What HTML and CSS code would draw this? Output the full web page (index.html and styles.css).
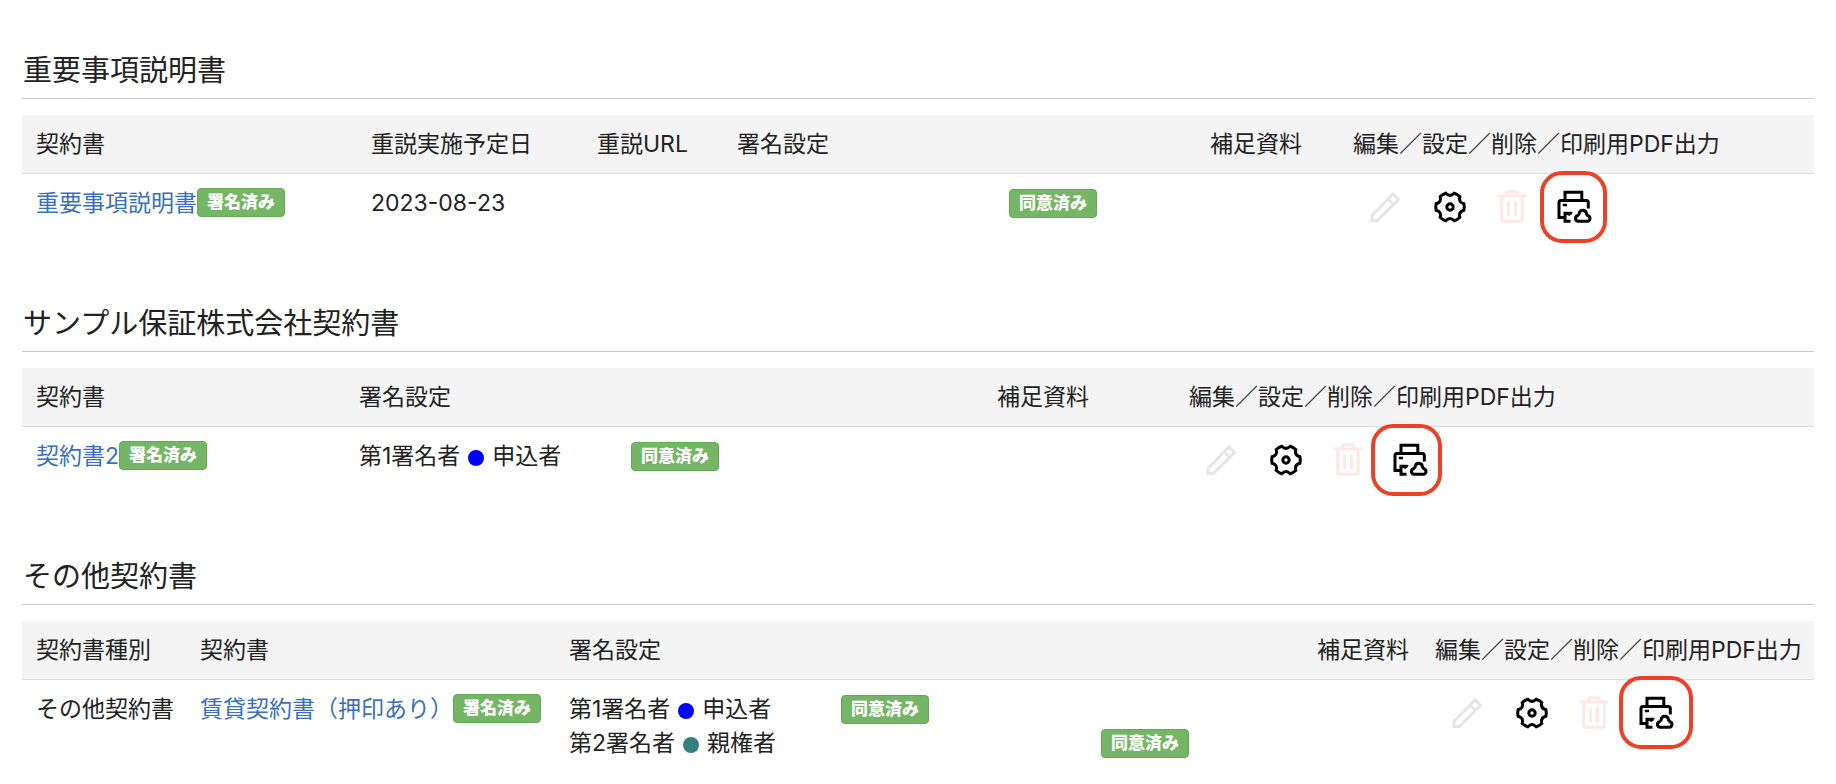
FILE: index.html
```html
<!DOCTYPE html>
<html lang="ja">

<head>
    <meta charset="UTF-8">
    <meta name="viewport" content="width=device-width, initial-scale=1.0">
    <title>契約書一覧</title>
    <link rel="stylesheet" href="styles.css">
</head>

<body>
    <!-- アイコン定義 -->
    <svg class="icon-defs" aria-hidden="true">
        <symbol id="icon-edit" viewBox="0 0 34 34">
            <path d="M2 30.5V25.5L23 4L28.5 9.5L7.5 30.5Z M18 9L23.5 14.5" />
        </symbol>
        <symbol id="icon-setting" viewBox="0 0 34 34">
            <path d="M13.8 3.3Q18 7.5 22.2 3.3A14.3 14.3 0 0 1 27.8 6.5Q26.2 12.2 31.9 13.8A14.3 14.3 0 0 1 31.9 20.2Q26.2 21.8 27.8 27.5A14.3 14.3 0 0 1 22.2 30.7Q18 26.5 13.8 30.7A14.3 14.3 0 0 1 8.2 27.5Q9.8 21.8 4.1 20.2A14.3 14.3 0 0 1 4.1 13.8Q9.8 12.2 8.2 6.5A14.3 14.3 0 0 1 13.8 3.3Z" />
            <circle cx="18" cy="17" r="3.2" />
        </symbol>
        <symbol id="icon-delete" viewBox="0 0 34 34">
            <path d="M4 6H32 M11.5 6L13.5 1.7H22.5L24.5 6 M7.7 6V29.5Q7.7 31.3 9.5 31.3H26.5Q28.3 31.3 28.3 29.5V6 M14.7 11.5V26 M21.3 11.5V26" />
        </symbol>
        <symbol id="icon-print" viewBox="0 0 34 34">
            <path d="M9 10V2.2H25.8V10 M8.5 27.6H3V12.5Q3 10.4 5 10.4H30.3Q32.3 10.4 32.3 12.5V18.5 M15.5 23.3H9V31.3H14.5" />
            <path class="solid" d="M6.8 13.7H11V16.3H6.8Z M9 22H17L13.5 26L9 24Z" />
            <path d="M21.8 31.2H31.6A2.8 2.8 0 0 0 31.8 25.7L30.6 24.2C30 18.8 23.6 18.8 23 24.2L21.6 25.7A2.8 2.8 0 0 0 21.8 31.2Z" />
        </symbol>
    </svg>

    <!-- 重要事項説明書 -->
    <section class="contract">
        <h2>重要事項説明書</h2>
        <table class="explain-table">
            <thead>
                <tr>
                    <th class="col-name">契約書</th>
                    <th class="col-date">重説実施予定日</th>
                    <th class="col-url">重説URL</th>
                    <th>署名設定</th>
                    <th class="col-doc">補足資料</th>
                    <th class="col-action">編集／設定／削除／印刷用PDF出力</th>
                </tr>
            </thead>
            <tbody>
                <tr>
                    <td><a href="#">重要事項説明書</a><span class="label">署名済み</span></td>
                    <td>2023-08-23</td>
                    <td></td>
                    <td>
                        <div class="signer">
                            <span></span>
                            <span class="label">同意済み</span>
                        </div>
                    </td>
                    <td></td>
                    <td>
                        <div class="actions">
                            <button class="edit" aria-label="編集" disabled><svg><use href="#icon-edit" /></svg></button>
                            <button class="setting" aria-label="設定"><svg><use href="#icon-setting" /></svg></button>
                            <button class="delete" aria-label="削除" disabled><svg><use href="#icon-delete" /></svg></button>
                            <button class="print" aria-label="印刷用PDF出力"><svg><use href="#icon-print" /></svg></button>
                        </div>
                    </td>
                </tr>
            </tbody>
        </table>
    </section>

    <!-- 保証会社契約書 -->
    <section class="contract">
        <h2>サンプル保証株式会社契約書</h2>
        <table class="guarantee-table">
            <thead>
                <tr>
                    <th class="col-name">契約書</th>
                    <th>署名設定</th>
                    <th class="col-doc">補足資料</th>
                    <th class="col-action">編集／設定／削除／印刷用PDF出力</th>
                </tr>
            </thead>
            <tbody>
                <tr>
                    <td><a href="#">契約書2</a><span class="label">署名済み</span></td>
                    <td>
                        <div class="signer">
                            <span>第1署名者<i class="dot blue"></i>申込者</span>
                            <span class="label">同意済み</span>
                        </div>
                    </td>
                    <td></td>
                    <td>
                        <div class="actions">
                            <button class="edit" aria-label="編集" disabled><svg><use href="#icon-edit" /></svg></button>
                            <button class="setting" aria-label="設定"><svg><use href="#icon-setting" /></svg></button>
                            <button class="delete" aria-label="削除" disabled><svg><use href="#icon-delete" /></svg></button>
                            <button class="print" aria-label="印刷用PDF出力"><svg><use href="#icon-print" /></svg></button>
                        </div>
                    </td>
                </tr>
            </tbody>
        </table>
    </section>

    <!-- その他契約書 -->
    <section class="contract">
        <h2>その他契約書</h2>
        <table class="other-table">
            <thead>
                <tr>
                    <th class="col-type">契約書種別</th>
                    <th class="col-name">契約書</th>
                    <th>署名設定</th>
                    <th class="col-doc">補足資料</th>
                    <th class="col-action">編集／設定／削除／印刷用PDF出力</th>
                </tr>
            </thead>
            <tbody>
                <tr>
                    <td>その他契約書</td>
                    <td><a href="#">賃貸契約書（押印あり）</a><span class="label">署名済み</span></td>
                    <td>
                        <div class="signer">
                            <span>第1署名者<i class="dot blue"></i>申込者</span>
                            <span class="label">同意済み</span>
                        </div>
                        <div class="signer">
                            <span>第2署名者<i class="dot teal"></i>親権者</span>
                            <span></span>
                            <span class="label">同意済み</span>
                        </div>
                    </td>
                    <td></td>
                    <td>
                        <div class="actions">
                            <button class="edit" aria-label="編集" disabled><svg><use href="#icon-edit" /></svg></button>
                            <button class="setting" aria-label="設定"><svg><use href="#icon-setting" /></svg></button>
                            <button class="delete" aria-label="削除" disabled><svg><use href="#icon-delete" /></svg></button>
                            <button class="print" aria-label="印刷用PDF出力"><svg><use href="#icon-print" /></svg></button>
                        </div>
                    </td>
                </tr>
            </tbody>
        </table>
    </section>
</body>

</html>
```
FILE: styles.css
```css
body {
    margin: 0;
    padding: 49px 22px 0;
    background-color: #fff;
    color: #222;
    font-family: Inter, "Noto Sans CJK JP", sans-serif;
    font-size: 23px;
    line-height: 34px;
}

.icon-defs {
    display: none;
}

.contract {
    margin-bottom: 66px;
}

.contract:last-child {
    margin-bottom: 0;
}

h2 {
    margin: 0 0 16px;
    padding: 0 1px 5px;
    border-bottom: 1px solid #ccc;
    font-size: 29px;
    font-weight: normal;
    line-height: 44px;
}

table {
    width: 100%;
    border-collapse: separate;
    border-spacing: 0;
    table-layout: fixed;
}

th,
td {
    height: 34px;
    padding: 12px 14px;
    text-align: left;
    vertical-align: top;
    font-weight: normal;
    white-space: nowrap;
}

th {
    background-color: #f4f4f4;
    border-bottom: 1px solid #ddd;
}

a {
    color: #3a70b5;
    text-decoration: none;
}

/* 列幅:署名設定の列は残り幅 */
.explain-table .col-name {
    width: 307px;
}

.explain-table .col-date {
    width: 198px;
}

.explain-table .col-url {
    width: 112px;
}

.explain-table .col-doc {
    width: 115px;
}

.explain-table .col-action {
    width: 447px;
}

.guarantee-table .col-name {
    width: 295px;
}

.guarantee-table .col-doc {
    width: 164px;
}

.guarantee-table .col-action {
    width: 611px;
}

.other-table .col-type {
    width: 136px;
}

.other-table .col-name {
    width: 341px;
}

.other-table .col-doc {
    width: 90px;
}

.other-table .col-action {
    width: 365px;
}

.label {
    display: inline-block;
    box-sizing: border-box;
    height: 29px;
    padding: 0 9px;
    border: 1px solid #62ab54;
    border-radius: 4px;
    background-color: #74b566;
    color: #fff;
    font-size: 17px;
    font-weight: 900;
    line-height: 26px;
    vertical-align: middle;
    margin: -4px 0 0;
}

.signer {
    display: grid;
    grid-template-columns: 272px 260px auto;
    align-items: center;
    height: 34px;
}

.signer .label {
    justify-self: start;
    margin: 0;
}

.dot {
    display: inline-block;
    width: 16px;
    height: 16px;
    margin: 0 8px;
    border-radius: 50%;
    vertical-align: -2px;
}

.blue {
    background-color: #0000fb;
}

.teal {
    background-color: #348080;
}

.actions {
    display: flex;
    gap: 28px;
    height: 34px;
    padding: 4px 0 0 17px;
}

button {
    position: relative;
    width: 34px;
    height: 34px;
    padding: 0;
    border: none;
    background: none;
    color: #000;
    cursor: pointer;
}

button:disabled {
    cursor: default;
}

button svg {
    display: block;
    width: 34px;
    height: 34px;
    overflow: visible;
    fill: none;
    stroke: currentColor;
    stroke-width: 3;
}

symbol {
    overflow: visible;
}

.solid {
    fill: currentColor;
    stroke: none;
}

.edit {
    color: #e5e5e5;
}

.delete {
    color: #fde8e8;
}

/* 印刷ボタンの赤枠 */
.print::after {
    content: "";
    position: absolute;
    inset: -19px -17px -19px -16px;
    border: 4px solid #ec4127;
    border-radius: 22px;
}

.guarantee-table .print::after {
    inset: -19px -16px -19px -21px;
}

.other-table .print::after {
    inset: -20px -21px -19px -19px;
}
```
